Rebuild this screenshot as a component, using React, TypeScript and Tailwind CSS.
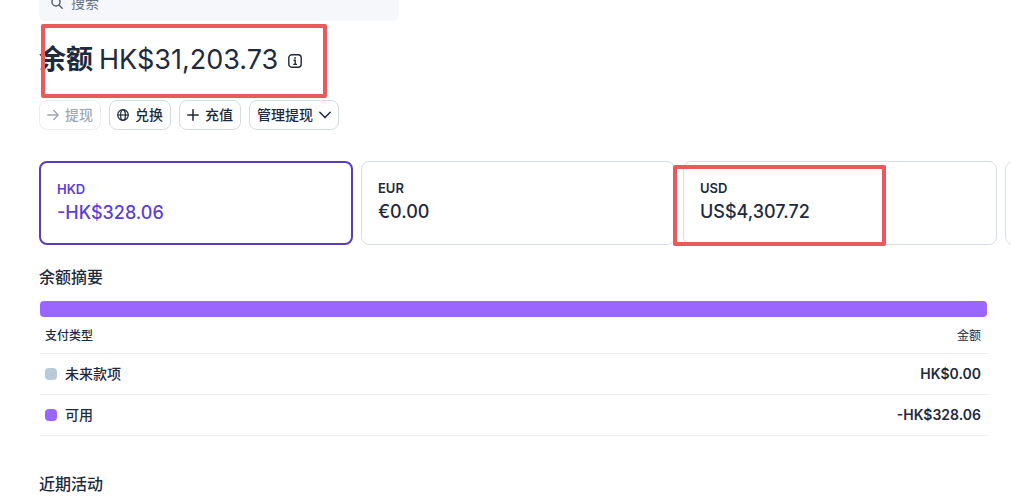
import { useState } from "react";
import type { ReactNode } from "react";

interface Currency {
    code: string;
    amount: string;
    marked?: boolean;
}

const currencies: Currency[] = [
    { code: "HKD", amount: "-HK$328.06" },
    { code: "EUR", amount: "€0.00" },
    { code: "USD", amount: "US$4,307.72", marked: true },
];

const summaryRows = [
    { label: "未来款项", amount: "HK$0.00", color: "bg-[#b9c9d9]" },
    { label: "可用", amount: "-HK$328.06", color: "bg-[#9966ff]" },
];

function ActionButton({ children, disabled }: { children: ReactNode; disabled?: boolean }) {
    return (
        <button
            type="button"
            disabled={disabled}
            className="flex h-[30px] items-center gap-1.5 rounded-lg border border-[#d5dbe1] px-[7px] text-sm font-medium whitespace-nowrap disabled:border-[#eaedf1] disabled:text-[#a3a8b0]"
        >
            {children}
        </button>
    );
}

function SearchBar() {
    return (
        <header className="flex h-[21px] items-end overflow-hidden">
            <label className="flex h-9 w-[360px] shrink-0 items-center gap-2 rounded-md bg-[#f5f7fa] px-3 text-[#596171]">
                <svg className="size-3 shrink-0" viewBox="0 0 12 12" fill="none" stroke="currentColor" strokeWidth="1.5" strokeLinecap="round">
                    <circle cx="5" cy="5" r="4" />
                    <path d="M8 8l3.2 3.2" />
                </svg>
                <input
                    type="text"
                    aria-label="搜索"
                    placeholder="搜索"
                    className="w-full bg-transparent text-sm outline-none placeholder:text-[#687385]"
                />
            </label>
        </header>
    );
}

function CurrencyCard({ currency, active, onSelect }: { currency: Currency; active: boolean; onSelect: () => void }) {
    return (
        <div className="relative w-[314px] shrink-0">
            <button
                type="button"
                onClick={onSelect}
                className={`flex h-[84px] w-full flex-col items-start rounded-lg px-4 pt-4 text-left ${
                    active ? "border-2 border-[#5a3fb8] text-[#5b3fd6]" : "border border-[#d8dee4]"
                }`}
            >
                <span className="text-[13px] leading-5 font-semibold">{currency.code}</span>
                <span className="text-lg leading-7 font-medium">{currency.amount}</span>
            </button>
            {currency.marked && (
                <div className="pointer-events-none absolute top-1 -left-2.5 h-[81px] w-[213px] rounded-xs border-4 border-[#e85a5c]" />
            )}
        </div>
    );
}

export default function App() {
    const [selected, setSelected] = useState("HKD");

    return (
        <main className="overflow-hidden bg-white pl-[39px] font-['Inter','Noto_Sans_CJK_SC',sans-serif] text-[#1f2a3d]">
            <SearchBar />

            {/* Total balance */}
            <div className="relative flex h-[79px] items-center gap-2.5 pb-0.5">
                <h1 className="flex items-baseline gap-1.5 text-[27px] leading-8 whitespace-nowrap">
                    <span className="font-bold">余额</span>
                    <span className="font-normal">HK$31,203.73</span>
                </h1>
                <button type="button" aria-label="余额说明" className="mt-0.5">
                    <svg className="size-3.5" viewBox="0 0 14 14" fill="none" stroke="currentColor" strokeWidth="1.4">
                        <rect x="0.8" y="0.8" width="12.4" height="12.4" rx="3" />
                        <path d="M5.5 6.3h1.7v4.2M5.2 10.4h3.8" />
                        <circle cx="7" cy="3.9" r="0.9" fill="currentColor" stroke="none" />
                    </svg>
                </button>
                <div className="pointer-events-none absolute top-[3px] left-0.5 h-[74px] w-[286px] rounded-xs border-4 border-[#e85a5c]" />
            </div>

            <div className="flex gap-2">
                <ActionButton disabled>
                    <svg className="size-3" viewBox="0 0 12 12" fill="none" stroke="currentColor" strokeWidth="1.4" strokeLinecap="round" strokeLinejoin="round">
                        <path d="M0.8 6h10.4M6.8 1.6L11.2 6l-4.4 4.4" />
                    </svg>
                    提现
                </ActionButton>
                <ActionButton>
                    <svg className="size-3" viewBox="0 0 12 12" fill="none" stroke="currentColor" strokeWidth="1.2">
                        <circle cx="6" cy="6" r="5.3" />
                        <ellipse cx="6" cy="6" rx="2.4" ry="5.3" />
                        <path d="M0.7 6h10.6" />
                    </svg>
                    兑换
                </ActionButton>
                <ActionButton>
                    <svg className="size-3" viewBox="0 0 12 12" fill="none" stroke="currentColor" strokeWidth="1.5" strokeLinecap="round">
                        <path d="M6 0.8v10.4M0.8 6h10.4" />
                    </svg>
                    充值
                </ActionButton>
                <ActionButton>
                    管理提现
                    <svg className="w-3" viewBox="0 0 12 8" fill="none" stroke="currentColor" strokeWidth="1.5" strokeLinecap="round" strokeLinejoin="round">
                        <path d="M0.8 1.2L6 6.6l5.2-5.4" />
                    </svg>
                </ActionButton>
            </div>

            {/* Currency cards, the row runs past the right edge */}
            <div className="mt-[31px] flex gap-2 overflow-hidden pb-1">
                {currencies.map((currency) => (
                    <CurrencyCard
                        key={currency.code}
                        currency={currency}
                        active={selected === currency.code}
                        onSelect={() => setSelected(currency.code)}
                    />
                ))}
                <div className="h-[84px] w-[314px] shrink-0 rounded-lg border border-[#d8dee4]" />
            </div>

            <section className="mt-4 mr-6">
                <h2 className="text-base leading-6 font-medium">余额摘要</h2>
                <div className="mt-3 ml-px h-4 rounded-sm bg-[#9966ff]" />
                <table className="ml-px w-full text-sm">
                    <thead>
                        <tr className="h-9 border-b border-[#ebeef1] text-xs">
                            <th className="pt-0.5 pl-[5px] text-left font-medium">支付类型</th>
                            <th className="pt-0.5 pr-[7px] text-right font-normal">金额</th>
                        </tr>
                    </thead>
                    <tbody>
                        {summaryRows.map((row) => (
                            <tr key={row.label} className="h-[41px] border-b border-[#ebeef1] font-medium">
                                <td className="pl-[5px]">
                                    <span className="flex items-center gap-2">
                                        <span className={`size-3 rounded-sm ${row.color}`} />
                                        {row.label}
                                    </span>
                                </td>
                                <td className="pr-[7px] text-right font-semibold">{row.amount}</td>
                            </tr>
                        ))}
                    </tbody>
                </table>
            </section>

            <h2 className="mt-9 text-base leading-6 font-medium">近期活动</h2>
        </main>
    );
}
